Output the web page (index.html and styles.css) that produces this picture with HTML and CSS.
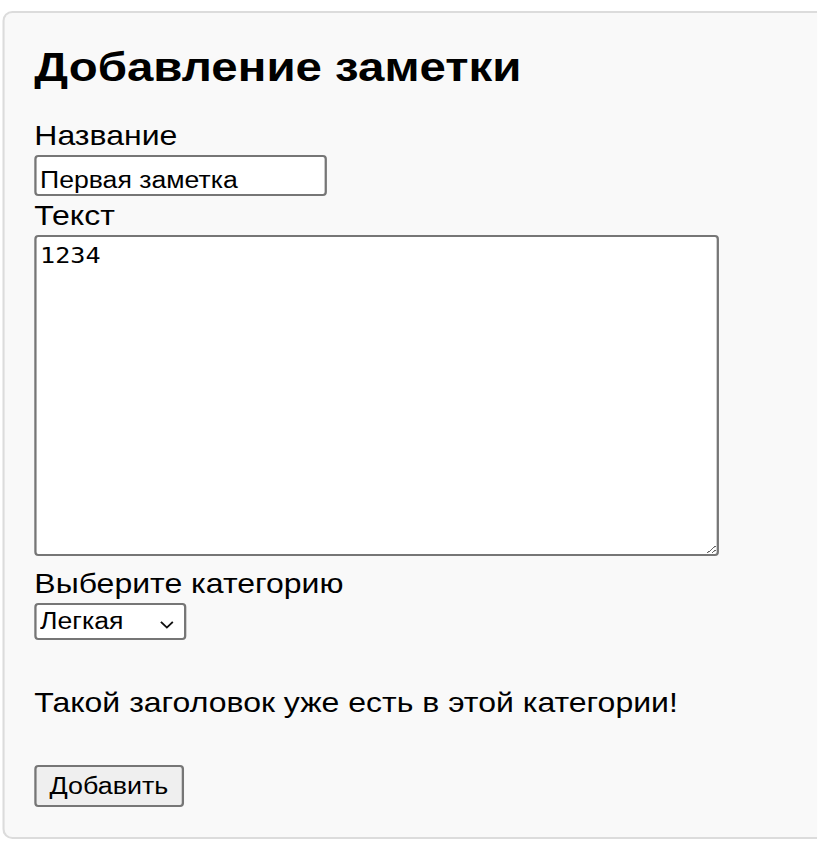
FILE: index.html
```html
<!DOCTYPE html>
<html lang="ru">
<head>
<meta charset="utf-8">
<title>Добавление заметки</title>
<link rel="stylesheet" href="styles.css">
</head>
<body>
<div class="page">
  <div class="card">
    <h2 class="title">Добавление заметки</h2>
    <form class="form">
      <label class="label" for="name">Название</label>
      <input class="field input" id="name" type="text" value="Первая заметка">
      <label class="label" for="text">Текст</label>
      <textarea class="field textarea" id="text">1234</textarea>
      <label class="label label-cat" for="cat">Выберите категорию</label>
      <select class="field select" id="cat">
        <option>Легкая</option>
        <option>Средняя</option>
        <option>Сложная</option>
      </select>
      <p class="message">Такой заголовок уже есть в этой категории!</p>
      <button class="btn" type="button">Добавить</button>
    </form>
  </div>
</div>
</body>
</html>
```
FILE: styles.css
```css
html, body {
  margin: 0;
  padding: 0;
  background: #ffffff;
  overflow: hidden;
}

body {
  font-family: "Liberation Sans", Arial, Helvetica, sans-serif;
  color: #000000;
}

/* the reference is stretched horizontally relative to its height */
.page {
  width: 715px;
  transform: scaleX(1.143);
  transform-origin: 0 0;
}

.card {
  margin: 11px 0 0 2px;
  background: #f9f9f9;
  border: 2px solid #dcdcdc;
  border-right: 0;
  border-radius: 8.75px 0 0 8.75px / 10px 0 0 10px;
  padding: 0 0 30px 26px;
}

.title {
  margin: 30px 0 28px;
  font-size: 41.5px;
  line-height: 48px;
  font-weight: bold;
}

.form {
  display: flex;
  flex-direction: column;
  align-items: flex-start;
}

.label {
  display: block;
  font-size: 28px;
  line-height: 33px;
}

.field {
  box-sizing: border-box;
  border: 2px solid #767676;
  border-radius: 3.5px / 4px;
  background: #ffffff;
  color: #000000;
  margin: 3px 0 3px;
}

.input {
  width: 256px;
  height: 41px;
  padding: 10px 3px 1px;
  font-family: "Liberation Sans", Arial, sans-serif;
  font-size: 23.3px;
  line-height: 26px;
}

.textarea {
  width: 599px;
  height: 321px;
  margin-bottom: 11px;
  padding: 6px 3px;
  font-family: "DejaVu Sans Mono", Menlo, monospace;
  font-size: 22px;
  line-height: 26px;
}

.select {
  -webkit-appearance: none;
  appearance: none;
  width: 133px;
  height: 37px;
  padding: 3px 3px 6px;
  font-family: "Liberation Sans", Arial, sans-serif;
  font-size: 23.3px;
  background-image: url("data:image/svg+xml;utf8,<svg xmlns='http://www.w3.org/2000/svg' width='12.25' height='8' viewBox='0 0 12.25 8'><path d='M0.8 0.9 L6.125 6.6 L11.45 0.9' fill='none' stroke='%23111' stroke-width='1.7'/></svg>");
  background-repeat: no-repeat;
  background-position: right 8.5px top 15.5px;
  background-size: 12.25px 8px;
}

.message {
  margin: 43px 0 0;
  font-size: 28px;
  line-height: 33px;
}

.btn {
  box-sizing: border-box;
  margin-top: 46px;
  width: 130.5px;
  height: 42px;
  padding: 0 4px;
  font-family: "Liberation Sans", Arial, sans-serif;
  font-size: 23.5px;
  color: #000000;
  background: #efefef;
  border: 2px solid #767676;
  border-radius: 3.5px / 4px;
}
```
